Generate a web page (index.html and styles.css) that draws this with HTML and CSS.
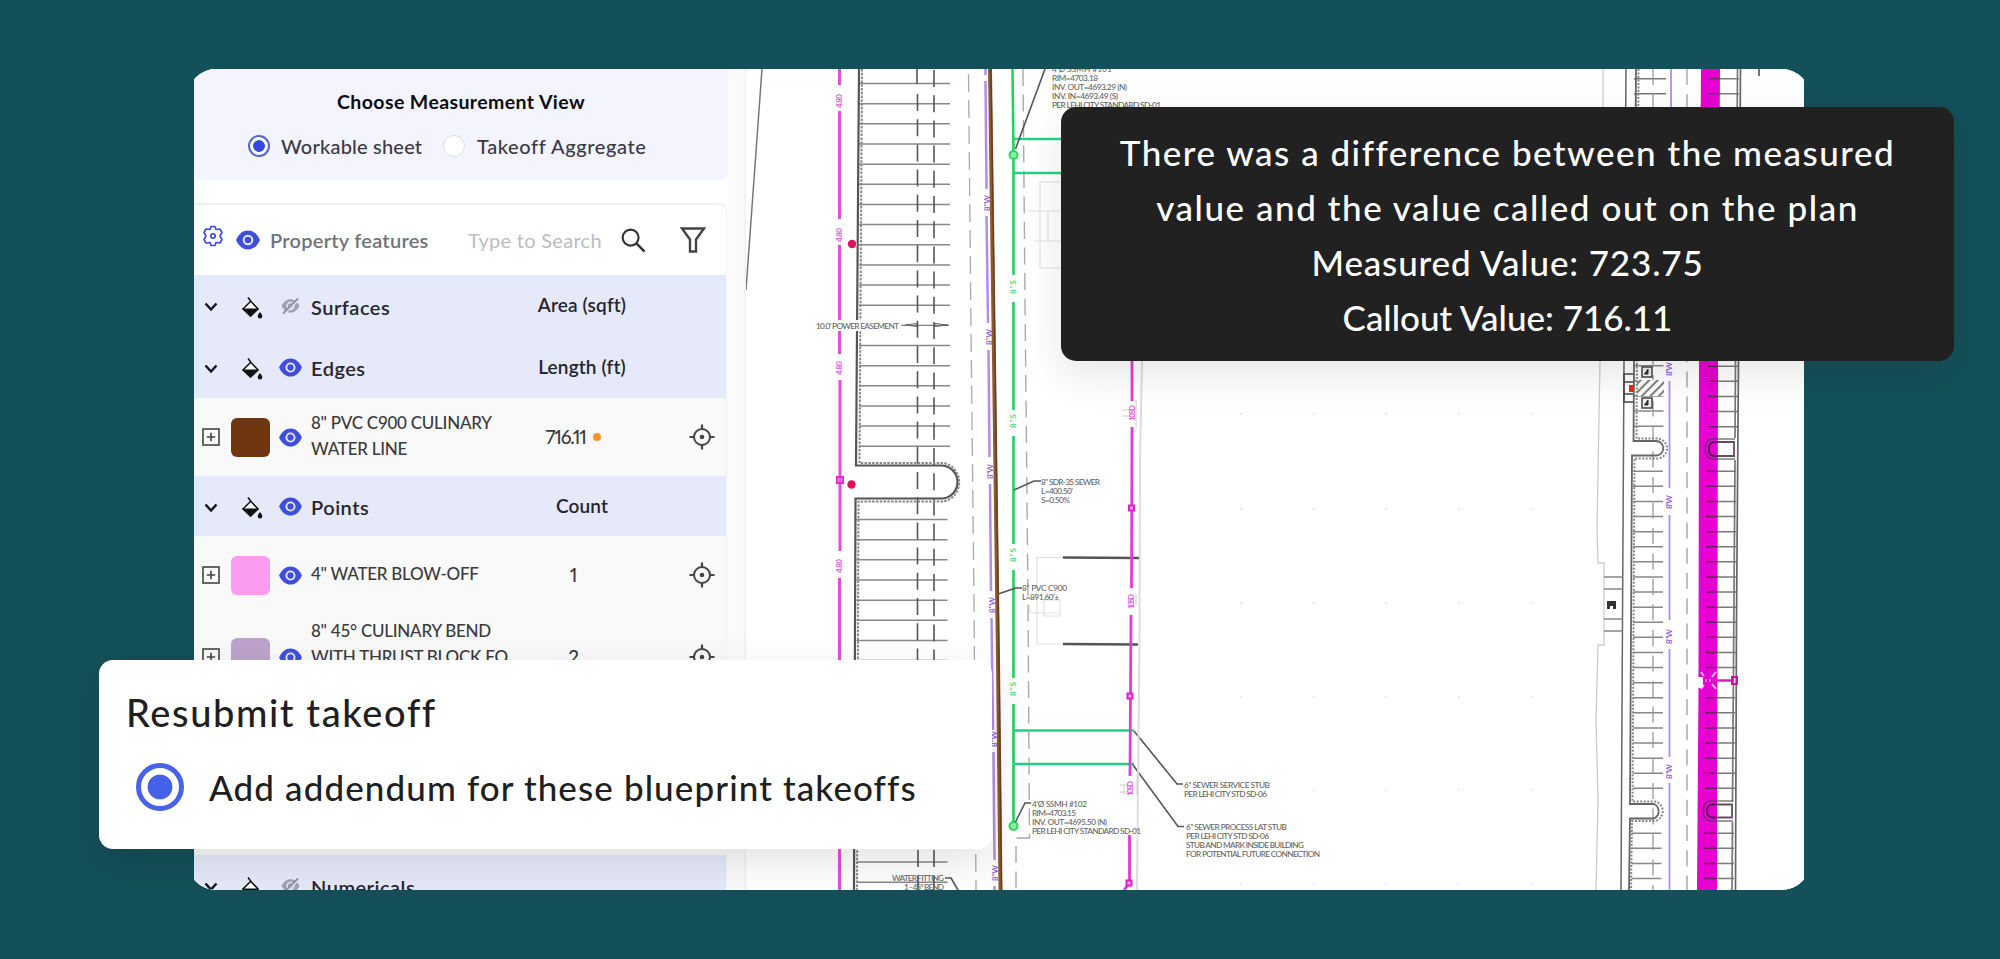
FILE: index.html
```html
<!DOCTYPE html>
<html lang="en">

<head>
    <meta charset="UTF-8">
    <meta name="viewport" content="width=device-width, initial-scale=1.0">
    <title>Takeoff Review</title>
    <link rel="stylesheet" href="styles.css">
</head>

<body>
    <!-- Shared icons -->
    <svg class="icon-defs" width="0" height="0">
        <symbol id="eye" viewBox="0 0 24 20">
            <path d="M0 10C3 3.5 7 0.5 12 0.5S21 3.5 24 10C21 16.500 17 19.500 12 19.500S3 16.500 0 10Z" fill="#3f4fdc" />
            <circle cx="12" cy="10" r="4.300" fill="none" stroke="#e6e9ff" stroke-width="2" />
        </symbol>
        <symbol id="eye-off" viewBox="0 0 20 18">
            <path d="M0.500 9C3.500 3.500 7 2 10 2S16.500 3.500 19.500 9C16.500 14.500 13 16 10 16S3.500 14.500 0.500 9Z" fill="#9ea3b0" />
            <circle cx="10" cy="9" r="3.600" fill="none" stroke="#e5e9fa" stroke-width="1.500" />
            <path d="M3.500 17.500L19 2.500" stroke="#e5e9fa" stroke-width="1.500" />
            <path d="M2 17L18 1" stroke="#8d93a3" stroke-width="2" />
        </symbol>
        <symbol id="chevron" viewBox="0 0 14 10">
            <path d="M1.500 1.500L7 7.500L12.500 1.500" fill="none" stroke="#15151f" stroke-width="2.500" />
        </symbol>
        <symbol id="bucket" viewBox="0 0 22 22">
            <path d="M7 0.500L10 4.500L17 12L9.500 19L2 12L9.500 4.500" fill="#fff" stroke="#111" stroke-width="1.500" />
            <path d="M1 11.500H18L9.500 20Z" fill="#111" />
            <path d="M19 15C20.500 17 21.300 18 21.300 19.200A2.300 2.300 0 0 1 16.700 19.200C16.700 18 17.500 17 19 15Z" fill="#111" />
        </symbol>
        <symbol id="plus" viewBox="0 0 18 18">
            <rect x="1" y="1" width="16" height="16" fill="none" stroke="#444" stroke-width="1.600" />
            <path d="M9 4.800V13.200M4.800 9H13.200" stroke="#444" stroke-width="1.600" />
        </symbol>
        <symbol id="target" viewBox="0 0 26 26">
            <circle cx="13" cy="13" r="8" fill="none" stroke="#444" stroke-width="2" />
            <circle cx="13" cy="13" r="2.300" fill="#444" />
            <path d="M13 0.500V5M13 21V25.500M0.500 13H5M21 13H25.500" stroke="#444" stroke-width="2.200" />
        </symbol>
    </svg>

    <main class="screen">
        <section class="sidebar">
            <div class="view-picker">
                <h2>Choose Measurement View</h2>
                <div class="view-options">
                    <span class="radio checked"></span>
                    <span class="workable">Workable sheet</span>
                    <span class="radio"></span>
                    <span class="aggregate">Takeoff Aggregate</span>
                </div>
            </div>

            <div class="features">
                <div class="features-bar">
                    <svg class="gear" viewBox="0 0 20 22">
                        <path d="M8 1.500H12L13 4.500L17 4L19 7.500L17 11L19 14.500L17 18L13 17.500L12 20.500H8L7 17.500L3 18L1 14.500L3 11L1 7.500L3 4L7 4.500Z" fill="none" stroke="#3f4fdc" stroke-width="1.700" stroke-linejoin="round" />
                        <circle cx="10" cy="11" r="2.200" fill="none" stroke="#3f4fdc" stroke-width="1.700" />
                    </svg>
                    <svg class="eye-lg"><use href="#eye" /></svg>
                    <span class="features-title">Property features</span>
                    <span class="search-hint">Type to Search</span>
                    <svg class="search" viewBox="0 0 26 26">
                        <circle cx="10" cy="10" r="8.300" fill="none" stroke="#333" stroke-width="2.200" />
                        <path d="M16 16L24.500 24.500" stroke="#333" stroke-width="2.600" />
                    </svg>
                    <svg class="funnel" viewBox="0 0 26 26">
                        <path d="M2 1.500H24L16 12.500V24.500H10V12.500Z" fill="none" stroke="#444" stroke-width="2.400" />
                    </svg>
                </div>

                <div class="row group">
                    <svg class="chevron"><use href="#chevron" /></svg>
                    <svg class="bucket"><use href="#bucket" /></svg>
                    <svg class="eye-off"><use href="#eye-off" /></svg>
                    <span class="name">Surfaces</span>
                    <span class="unit">Area (sqft)</span>
                </div>
                <div class="row group">
                    <svg class="chevron"><use href="#chevron" /></svg>
                    <svg class="bucket"><use href="#bucket" /></svg>
                    <svg class="eye"><use href="#eye" /></svg>
                    <span class="name">Edges</span>
                    <span class="unit">Length (ft)</span>
                </div>
                <div class="row item">
                    <svg class="plus"><use href="#plus" /></svg>
                    <span class="swatch brown"></span>
                    <svg class="eye"><use href="#eye" /></svg>
                    <span class="label">8" PVC C900 CULINARY<br>WATER LINE</span>
                    <span class="value">716.11<i class="flag"></i></span>
                    <svg class="target"><use href="#target" /></svg>
                </div>
                <div class="row group points">
                    <svg class="chevron"><use href="#chevron" /></svg>
                    <svg class="bucket"><use href="#bucket" /></svg>
                    <svg class="eye"><use href="#eye" /></svg>
                    <span class="name">Points</span>
                    <span class="unit">Count</span>
                </div>
                <div class="row item">
                    <svg class="plus"><use href="#plus" /></svg>
                    <span class="swatch pink"></span>
                    <svg class="eye"><use href="#eye" /></svg>
                    <span class="label">4" WATER BLOW-OFF</span>
                    <span class="value">1</span>
                    <svg class="target"><use href="#target" /></svg>
                </div>
                <div class="row item tall">
                    <svg class="plus"><use href="#plus" /></svg>
                    <span class="swatch mauve"></span>
                    <svg class="eye"><use href="#eye" /></svg>
                    <span class="label">8" 45° CULINARY BEND<br>WITH THRUST BLOCK FO</span>
                    <span class="value">2</span>
                    <svg class="target"><use href="#target" /></svg>
                </div>
                <div class="row group numericals">
                    <svg class="chevron"><use href="#chevron" /></svg>
                    <svg class="bucket"><use href="#bucket" /></svg>
                    <svg class="eye-off"><use href="#eye-off" /></svg>
                    <span class="name">Numericals</span>
                </div>
            </div>
        </section>

        <!-- Blueprint -->
        <svg class="plan" viewBox="746 69 1058 821" width="1058" height="821" fill="none">
            <defs>
                <pattern id="hatch" width="6" height="6" patternUnits="userSpaceOnUse" patternTransform="rotate(45)">
                    <path d="M1 0V6" stroke="#555" stroke-width="1.500" />
                </pattern>
            </defs>
            <path d="M762 69C758 130 752 200 746 290" stroke="#777" stroke-width="1.500" />

            <!-- left utility line -->
            <path d="M839.500 69V85M839.500 111V219M839.500 245V354M840 380V551M839.500 578V890" stroke="#e24ddd" stroke-width="3" />
            <rect x="837" y="477" width="6" height="6" stroke="#e02bd0" stroke-width="2" />
            <g class="mark pink-mark">
                <text transform="translate(842 108) rotate(-90)" textLength="14">4.80</text>
                <text transform="translate(842 242) rotate(-90)" textLength="14">4.80</text>
                <text transform="translate(842 375) rotate(-90)" textLength="14">4.80</text>
                <text transform="translate(842 573) rotate(-90)" textLength="14">4.80</text>
            </g>
            <circle cx="852" cy="244" r="4.200" fill="#e0105e" />
            <circle cx="851.500" cy="484.500" r="4.200" fill="#e0105e" />

            <!-- left parking stalls -->
            <path d="M904.500 82.800V452" stroke="#888" stroke-width="91" stroke-dasharray="1.500 18.650" />
            <path d="M902 518.800V890" stroke="#888" stroke-width="91" stroke-dasharray="1.500 18.650" />
            <path d="M890 325.300H950" stroke="#fff" stroke-width="4" />
            <path d="M901 325.300H949M905 325L917 323.500V326.500ZM948 325L935 323.500V326.500Z" stroke="#666" />
            <path d="M917 69V84M917.500 94V660M934 70V660M918 850V890M934 850V890" stroke="#555" stroke-width="1.600" stroke-dasharray="17 8.200" />
            <path d="M859 69L856 465.500H941A16 16 0 0 1 941 498.500H855.500L854 890" stroke="#555" stroke-width="2.200" />
            <path d="M862 69L859.500 463H941A17.500 18.500 0 0 1 941 501.500H858.500L857 890" stroke="#888" stroke-width="2" stroke-dasharray="2.500 1.300" />
            <rect x="814" y="320" width="86" height="11" fill="#fff" />
            <text x="816" y="328.500" class="note" textLength="83">10.0' POWER EASEMENT</text>
            <path d="M968.500 74L971 330L974 600L976 890" stroke="#aaa" stroke-width="1.300" stroke-dasharray="18 8" />

            <!-- water main -->
            <path d="M985.500 69V75M985.500 81L986.500 189M986.500 216L988 323M988.500 350L989.500 457M990 484L991 591M991.500 618L993 730M993.500 752L994.500 860M994.500 886V890" stroke="#b48ce8" stroke-width="2.500" />
            <g class="mark violet-mark">
                <text transform="translate(990 211) rotate(-90)" textLength="16">8"W</text>
                <text transform="translate(991.500 345) rotate(-90)" textLength="16">8"W</text>
                <text transform="translate(993 479) rotate(-90)" textLength="15">8"W</text>
                <text transform="translate(995 613) rotate(-90)" textLength="16">8"W</text>
                <text transform="translate(996.500 747) rotate(-90)" textLength="16">8"W</text>
                <text transform="translate(997.500 881) rotate(-90)" textLength="16">8"W</text>
            </g>
            <path d="M990 69L994 360L998 660L1000.500 890" stroke="#8a5a35" stroke-width="4" />
            <path d="M991 69L995 360L999 660L1001.500 890" stroke="#6b3c18" stroke-width="1.300" />

            <!-- sewer -->
            <path d="M1023 69L1025 300L1028 600L1029.500 838H1016V890" stroke="#aaa" stroke-width="1.400" stroke-dasharray="17 8.500" />
            <path d="M1012.500 69L1013.500 155V275M1013.500 302V410M1013.500 436V544M1013.500 570V678M1013.500 704V822" stroke="#1ed45c" stroke-width="2.600" />
            <path d="M1013 139H1062M1013 173H1062M1013 730.500H1134M1013 764H1134" stroke="#22d182" stroke-width="2.400" />
            <circle cx="1013.500" cy="155" r="4" fill="#8df0a8" stroke="#2bd85d" stroke-width="2" />
            <circle cx="1013.500" cy="826" r="4" fill="#8df0a8" stroke="#2bd85d" stroke-width="2" />
            <g class="mark green-mark">
                <text transform="translate(1016 294) rotate(-90)" textLength="14">8"S</text>
                <text transform="translate(1016 428) rotate(-90)" textLength="14">8"S</text>
                <text transform="translate(1016 562) rotate(-90)" textLength="14">8"S</text>
                <text transform="translate(1016 696) rotate(-90)" textLength="14">8"S</text>
            </g>
            <path d="M1045 69L1015.500 149M1014 490L1034 481H1041M998 594L1016 588H1022M1015.500 822L1025 803H1031M1134 731L1177 784H1183M1133 765L1178 826.500H1184M945 878H951L958 890" stroke="#555" stroke-width="1.600" />

            <!-- faint building outlines -->
            <path d="M1062 182H1040V268H1062M1028 211H1062M1034 241H1062M1048 211V241M1063 557.500H1037V644H1063M1030 605V613H1060M1044 600H1060V616H1044Z" stroke="#e2e2e2" stroke-width="1.200" />
            <path d="M1142 361L1140 460L1139.500 640L1137 890" stroke="#ddd" stroke-width="2" />
            <path d="M1122 410H1132M1122 416H1132M1120 785H1128M1120 792H1128M1124 785V795M1136 400V428M1136 594V606M1137 775V795" stroke="#ccc" />
            <path d="M1063 557.500L1139 558M1063 644L1138 644.500" stroke="#555" stroke-width="2.400" />

            <path d="M1132 361V401M1132 427L1131.500 588M1131 615L1130 776M1129.500 835V883L1124 890" stroke="#e33bd9" stroke-width="2.800" />
            <path d="M1129 505.500H1134V510.500H1129ZM1127.500 693.500H1132.500V698.500H1127.500ZM1126.500 880.500H1131.500V885.500H1126.500Z" fill="#f7a8f0" stroke="#dd1fc9" stroke-width="2" />
            <g class="mark pink-mark">
                <text transform="translate(1135 421) rotate(-90)" textLength="16">10SD</text>
                <text transform="translate(1134 609) rotate(-90)" textLength="15">10SD</text>
                <text transform="translate(1133 796) rotate(-90)" textLength="15">10SD</text>
            </g>

            <g class="note">
                <text x="1052" y="72">4'Ø SSMH #101</text>
                <text x="1052" y="81" textLength="46">RIM=4703.18</text>
                <text x="1052" y="90" textLength="75">INV. OUT=4693.29 (N)</text>
                <text x="1052" y="99" textLength="66">INV. IN=4693.49 (S)</text>
                <text x="1052" y="108" textLength="109">PER LEHI CITY STANDARD SD-01</text>
                <text x="1041" y="484.500" textLength="59">8" SDR-35 SEWER</text>
                <text x="1041" y="493.500" textLength="32">L=400.50'</text>
                <text x="1041" y="502.500" textLength="29">S=0.50%</text>
                <text x="1022" y="591" textLength="45">8" PVC C900</text>
                <text x="1022" y="600" textLength="37">L=891.60'±</text>
                <text x="1032" y="806.500" textLength="55">4'Ø SSMH #102</text>
                <text x="1032" y="816" textLength="44">RIM=4703.15</text>
                <text x="1032" y="825" textLength="75">INV. OUT=4695.50 (N)</text>
                <text x="1032" y="834" textLength="109">PER LEHI CITY STANDARD SD-01</text>
                <text x="1184" y="787.500" textLength="86">6" SEWER SERVICE STUB</text>
                <text x="1184" y="796.500" textLength="83">PER LEHI CITY STD SD-06</text>
                <text x="1186" y="830" textLength="101">6" SEWER PROCESS LAT STUB</text>
                <text x="1186" y="839" textLength="83">PER LEHI CITY STD SD-06</text>
                <text x="1186" y="848" textLength="118">STUB AND MARK INSIDE BUILDING</text>
                <text x="1186" y="857" textLength="134">FOR POTENTIAL FUTURE CONNECTION</text>
                <text x="892" y="881" textLength="52">WATER FITTING</text>
                <text x="904" y="889.500" textLength="40">1 - 45° BEND</text>
            </g>
            <path d="M1240 414H1533M1240 509H1533M1240 603H1533M1240 697H1533M1240 790H1533M1240 884H1533" stroke="#e4e4e4" stroke-width="1.500" stroke-dasharray="2 70.600" />

            <!-- east building edge -->
            <path d="M1603 69V180L1600 361L1597 530L1598 563H1604V645H1598L1596 720L1598 800L1596 890" stroke="#ccc" stroke-width="1.300" />
            <path d="M1626 69L1624 361L1622.500 620L1621 890" stroke="#666" stroke-width="1.500" />
            <path d="M1604 577H1623M1604 589H1623M1604 619H1623M1604 631H1623" stroke="#888" stroke-width="1.300" />
            <path d="M1607 601H1616V609H1613V606H1610V609H1607Z" fill="#333" />

            <!-- east parking stalls -->
            <path d="M1650 78V120" stroke="#777" stroke-width="32" stroke-dasharray="1.500 13.600" />
            <path d="M1648.500 365V435" stroke="#888" stroke-width="30" stroke-dasharray="1.500 13.600" />
            <path d="M1648 470.500V800" stroke="#888" stroke-width="30" stroke-dasharray="1.500 13.600" />
            <path d="M1646.500 832.500V890" stroke="#888" stroke-width="30" stroke-dasharray="1.500 13.600" />
            <path d="M1653 69V890" stroke="#999" stroke-width="1.300" stroke-dasharray="16 9.500" />
            <rect x="1637" y="380" width="27" height="16" fill="#fff" />
            <rect x="1637" y="380" width="27" height="16" fill="url(#hatch)" />
            <path d="M1636 69L1633.500 441H1656A7 7 0 0 1 1656 455.500H1632L1630 804H1654A8 8 0 0 1 1654 818.500H1630L1629 890" fill="#fff" fill-opacity=".01" stroke="#666" stroke-width="1.800" />
            <path d="M1638.500 69L1636.500 438.500H1657A9.500 9.500 0 0 1 1657 458.500H1634.500L1632.500 801.500H1655A10 10 0 0 1 1655 821H1632L1631 890" stroke="#888" stroke-width="2" stroke-dasharray="2 1.500" />
            <path d="M1633 374H1624V402H1633M1624 382H1633M1624 394H1633" stroke="#444" stroke-width="1.500" />
            <rect x="1629" y="385" width="5" height="7" fill="#d8321c" />
            <path d="M1642 367H1652V377H1642ZM1642 398H1652V408H1642Z" fill="#eee" stroke="#444" stroke-width="1.500" />
            <path d="M1648 369V374H1644.500ZM1648 400V405H1644.500Z" fill="#333" stroke="#333" />

            <path d="M1671 69V107M1669.500 381V488M1669.500 515V620M1669.500 649V757M1669.500 783V890" stroke="#b48ce8" stroke-width="1.800" />
            <g class="mark violet-mark">
                <text transform="translate(1672 376) rotate(-90)" textLength="14">8"W</text>
                <text transform="translate(1672 509) rotate(-90)" textLength="14">8"W</text>
                <text transform="translate(1672 644) rotate(-90)" textLength="15">8"W</text>
                <text transform="translate(1672 779) rotate(-90)" textLength="15">8"W</text>
            </g>
            <path d="M1687 69V890" stroke="#aaa" stroke-width="1.500" stroke-dasharray="16 9.200" />

            <path d="M1701 69H1720L1718 361L1717 890H1697L1698.500 688H1703V677H1698.500L1699 361Z" fill="#e600d2" />
            <path d="M1701 672L1704 676M1701 689L1704 685M1716 672L1712 677M1716 689L1712 684" stroke="#ffc4f8" stroke-width="1.800" />
            <path d="M1706 679V682M1710 679V682" stroke="#f58aec" stroke-width="1.500" />
            <path d="M1724 78V120" stroke="#444" stroke-width="30" stroke-opacity=".7" stroke-dasharray="1.500 13.600" />
            <path d="M1723 365.500V430" stroke="#333" stroke-width="30" stroke-opacity=".65" stroke-dasharray="1.500 13.600" />
            <path d="M1721 470.500V672" stroke="#333" stroke-width="30" stroke-opacity=".65" stroke-dasharray="1.500 13.600" />
            <path d="M1720 697V795" stroke="#333" stroke-width="30" stroke-opacity=".65" stroke-dasharray="1.500 13.600" />
            <path d="M1719 832.500V890" stroke="#333" stroke-width="30" stroke-opacity=".65" stroke-dasharray="1.500 13.600" />
            <path d="M1740.500 69L1738.500 361L1736.500 620L1735.500 890" stroke="#666" stroke-width="1.700" />
            <path d="M1737.500 69L1735.500 361L1735 438M1735 460L1732.500 802M1732.500 822L1732 890" stroke="#777" stroke-width="1.700" />
            <path d="M1734 442H1714A6 6 0 0 0 1709 447V451A6 6 0 0 0 1714 456H1734ZM1732 804.500H1712A6 6 0 0 0 1707 809V813A6 6 0 0 0 1712 817.500H1732Z" stroke="#2c1030" stroke-opacity=".75" stroke-width="1.800" />
            <path d="M1735 439H1712A8 8 0 0 0 1705.500 446V452A8 8 0 0 0 1712 459H1735M1733 801H1710A8 8 0 0 0 1703.500 808V814A8 8 0 0 0 1710 821H1733" stroke="#444" stroke-opacity=".7" stroke-width="1.500" />
            <path d="M1712 680.500H1732" stroke="#d81cc4" stroke-width="2.500" />
            <rect x="1732" y="677" width="5" height="7" stroke="#c8149e" stroke-width="2" />
            <path d="M1759 69V76" stroke="#444" stroke-width="1.500" />
        </svg>
    </main>

    <div class="tooltip">
        <p class="line-a">There was a difference between the measured</p>
        <p class="line-b">value and the value called out on the plan</p>
        <p class="line-c">Measured Value: 723.75</p>
        <p class="line-d">Callout Value: 716.11</p>
    </div>

    <div class="resubmit">
        <h3>Resubmit takeoff</h3>
        <div class="addendum">
            <span class="radio-lg"></span>
            <span class="addendum-label">Add addendum for these blueprint takeoffs</span>
        </div>
    </div>
</body>

</html>
```
FILE: styles.css
```css
* {
    box-sizing: border-box;
}

body {
    margin: 0;
    width: 2000px;
    height: 959px;
    overflow: hidden;
    position: relative;
    background: #145059;
    font-family: Lato, "Open Sans", sans-serif;
    font-variant-ligatures: none;
    color: #26262e;
}

h2,
h3,
p {
    margin: 0;
}

span,
h2,
h3,
p {
    white-space: nowrap;
}

svg {
    flex-shrink: 0;
    display: block;
}

.icon-defs {
    position: absolute;
}

/* The side edges cut slightly into the rounded corners */
.screen {
    display: flex;
    width: 1622px;
    height: 821px;
    margin: 0 0 0 188px;
    transform: translateY(69px);
    border-radius: 28px;
    clip-path: inset(0 6px);
    overflow: hidden;
    background: #fff;
}

.sidebar {
    width: 558px;
    padding-left: 6px;
    flex-shrink: 0;
    background: linear-gradient(to right, #fff 539px, #fafafa 541px, #fafafa 556px, #f0f0f0 557px);
}

.view-picker {
    width: 534px;
    height: 111px;
    padding-top: 21px;
    background: #f3f4ff;
    border-radius: 0 0 6px 6px;
}

.view-picker h2 {
    text-align: center;
    font-size: 19.500px;
    line-height: 24px;
    font-weight: 700;
    letter-spacing: 0.4px;
    color: #0b0b12;
}

.view-options {
    display: flex;
    align-items: center;
    height: 24px;
    margin-top: 20px;
    padding-left: 54px;
    font-size: 20px;
    font-weight: 500;
    letter-spacing: 0.2px;
    color: #3a3a44;
}

.radio {
    width: 22px;
    height: 22px;
    border-radius: 50%;
    background: #fff;
    border: 1px solid #ddd;
    flex-shrink: 0;
}

.radio.checked {
    border: 2px solid #5563e0;
    background: radial-gradient(circle, #3448e4 5.500px, #fff 6.200px);
}

.workable {
    width: 162px;
    margin-left: 11px;
}

.aggregate {
    margin-left: 12px;
    letter-spacing: 0.6px;
}

.features {
    width: 533px;
    margin-top: 23px;
    background: #f9f9f9;
    border-top: 2px solid #f1f1f4;
    border-right: 1px solid #f0f0f3;
    border-radius: 0 8px 0 0;
}

.features-bar {
    display: flex;
    align-items: center;
    height: 70px;
    padding-left: 9px;
    background: #fff;
    border-radius: 0 8px 0 0;
    font-size: 20px;
}

.gear {
    width: 20px;
    height: 22px;
    margin-bottom: 9px;
}

.eye-lg {
    width: 26px;
    height: 20px;
    margin-left: 12px;
}

.features-title {
    width: 198px;
    margin-left: 9px;
    font-weight: 600;
    letter-spacing: 0.25px;
    color: #6d747c;
}

.search-hint {
    width: 153px;
    letter-spacing: 0.3px;
    color: #bcbcc0;
}

.search {
    width: 25px;
    height: 25px;
}

.funnel {
    width: 26px;
    height: 26px;
    margin-left: 34px;
}

.row {
    display: grid;
    grid-template-columns: 37px 47px 33px 187px 150px 1fr;
    align-items: center;
    background: #f9f9f9;
}

.group {
    height: 61.500px;
    background: #e5e9fa;
    font-size: 20px;
    font-weight: 600;
}

.name {
    padding-top: 2px;
    letter-spacing: 0.5px;
}

.points {
    height: 60px;
}

.item {
    height: 78px;
    line-height: 26px;
    color: #3b3b40;
}

.label {
    font-size: 17px;
    font-weight: 500;
    letter-spacing: -0.25px;
    margin-bottom: 2px;
}

.item.tall {
    height: 86px;
}

.tall .label {
    margin-bottom: 26px;
}

.numericals {
    margin-top: 155px;
}

.chevron {
    width: 14px;
    height: 10px;
    margin: 3px 0 0 10px;
}

.bucket {
    width: 22px;
    height: 22px;
    margin: 4px 0 0 10px;
}

.eye {
    width: 23px;
    height: 19px;
    margin-left: 1px;
}

.eye-off {
    width: 19px;
    height: 18px;
    margin-left: 3px;
}

.unit {
    text-align: center;
    padding-left: 18px;
    margin-bottom: 2px;
    font-size: 19px;
    letter-spacing: 0.15px;
    font-weight: 600;
}

.plus {
    width: 18px;
    height: 18px;
    margin-left: 8px;
}

.swatch {
    width: 39px;
    height: 39px;
    border-radius: 6px;
}

.brown {
    background: #6f3711;
}

.pink {
    background: #fb9cf0;
}

.mauve {
    background: #bda3cb;
}

.value {
    display: flex;
    align-items: center;
    justify-content: center;
    font-size: 19px;
    font-weight: 500;
    font-variant-numeric: proportional-nums;
    letter-spacing: -1.200px;
}

.flag {
    width: 8px;
    height: 8px;
    margin-left: 7px;
    border-radius: 50%;
    background: #fb9230;
}

.target {
    width: 26px;
    height: 26px;
    margin-left: 41px;
}

.plan {
    background: #fff;
}

.note {
    font-family: Lato, sans-serif;
    font-size: 8.300px;
    font-weight: 500;
    fill: #666;
}

.mark {
    font-family: Lato, sans-serif;
    font-size: 8px;
    font-weight: 700;
}

.pink-mark {
    fill: #e45fdc;
}

.violet-mark {
    fill: #9a63e0;
}

.green-mark {
    fill: #4fdc80;
}

.tooltip {
    position: absolute;
    left: 1061px;
    top: 107px;
    width: 893px;
    height: 254px;
    padding: 18px 0;
    border-radius: 15px;
    background: #212121;
    box-shadow: 0 14px 40px rgba(0, 0, 0, 0.1);
    color: #fff;
    text-align: center;
    font-size: 35px;
    line-height: 55px;
    font-weight: 500;
}

.line-a {
    letter-spacing: 1.500px;
}

.line-b {
    letter-spacing: 1.550px;
}

.line-c {
    letter-spacing: 0.850px;
}

.resubmit {
    position: absolute;
    left: 99px;
    top: 660px;
    width: 893px;
    height: 189px;
    padding: 25px 27px;
    border-radius: 14px;
    background: #fff;
    box-shadow: 0 14px 40px rgba(0, 0, 0, 0.11);
    color: #1f1f1f;
}

.resubmit h3 {
    font-size: 38px;
    line-height: 54px;
    font-weight: 500;
    letter-spacing: 1.600px;
}

.addendum {
    display: flex;
    align-items: center;
    margin: 24px 0 0 10px;
    height: 48px;
    font-size: 35px;
    font-weight: 500;
    letter-spacing: 1.100px;
}

.radio-lg {
    width: 48px;
    height: 48px;
    margin-right: 25px;
    border: 5px solid #4761e8;
    border-radius: 50%;
    background: radial-gradient(circle, #4461e9 12px, #fff 12.800px);
}
```
